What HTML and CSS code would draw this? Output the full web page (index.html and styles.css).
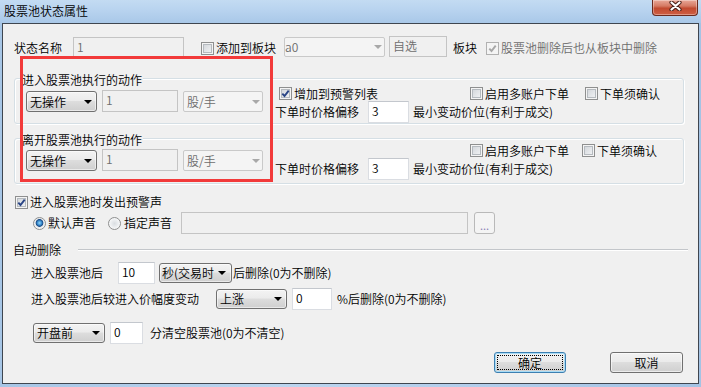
FILE: index.html
```html
<!DOCTYPE html>
<html lang="zh-CN">
<head>
    <meta charset="UTF-8">
    <meta name="viewport" content="width=device-width, initial-scale=1.0">
    <title>股票池状态属性</title>
    <link rel="stylesheet" href="styles.css">
</head>
<body>
    <div class="window">
        <div class="titlebar">
            <span class="title">股票池状态属性</span>
            <button type="button" class="close-btn" aria-label="关闭">
                <svg width="13" height="10" viewBox="0 0 13 10">
                    <path d="M2.5 1.5 L10.5 8.5 M10.5 1.5 L2.5 8.5" stroke="#4a2119" stroke-width="4.2" stroke-linecap="round"/>
                    <path d="M2.5 1.5 L10.5 8.5 M10.5 1.5 L2.5 8.5" stroke="#fff" stroke-width="2.2" stroke-linecap="round"/>
                </svg>
            </button>
        </div>

        <div class="client">
            <div class="row row-name">
                <span class="lbl lbl-name">状态名称</span>
                <div class="edit edit-disabled w-name">1</div>
                <label class="check check-block"><span class="box"></span>添加到板块</label>
                <div class="combo combo-disabled w-block"><span class="combo-text clip-a0">a0</span><span class="arrow"></span></div>
                <div class="edit edit-disabled w-self">自选</div>
                <span class="lbl lbl-block">板块</span>
                <label class="check check-disabled check-remove">
                    <span class="box"><svg class="tick" viewBox="0 0 11 11"><path d="M2.3 5.6 L4.5 8 L8.7 2.6"/></svg></span>股票池删除后也从板块中删除
                </label>
            </div>

            <div class="group group-enter">
                <span class="legend">进入股票池执行的动作</span>
                <div class="actions">
                    <div class="combo w-op"><span class="combo-text">无操作</span><span class="arrow"></span></div>
                    <div class="edit edit-disabled w-qty">1</div>
                    <div class="combo combo-disabled w-unit"><span class="combo-text">股/手</span><span class="arrow"></span></div>
                </div>
                <div class="orders">
                    <div class="order-top">
                        <label class="check check-alert">
                            <span class="box"><svg class="tick" viewBox="0 0 11 11"><path d="M2.3 5.6 L4.5 8 L8.7 2.6"/></svg></span>增加到预警列表
                        </label>
                        <label class="check check-multi"><span class="box"></span>启用多账户下单</label>
                        <label class="check"><span class="box"></span>下单须确认</label>
                    </div>
                    <div class="order-offset">
                        <span class="lbl">下单时价格偏移</span>
                        <div class="edit w-offset">3</div>
                        <span class="lbl lbl-tick">最小变动价位(有利于成交)</span>
                    </div>
                </div>
            </div>

            <div class="group group-leave">
                <span class="legend">离开股票池执行的动作</span>
                <div class="actions">
                    <div class="combo w-op"><span class="combo-text">无操作</span><span class="arrow"></span></div>
                    <div class="edit edit-disabled w-qty">1</div>
                    <div class="combo combo-disabled w-unit"><span class="combo-text">股/手</span><span class="arrow"></span></div>
                </div>
                <div class="orders">
                    <div class="order-top">
                        <label class="check check-multi"><span class="box"></span>启用多账户下单</label>
                        <label class="check"><span class="box"></span>下单须确认</label>
                    </div>
                    <div class="order-offset">
                        <span class="lbl">下单时价格偏移</span>
                        <div class="edit w-offset">3</div>
                        <span class="lbl lbl-tick">最小变动价位(有利于成交)</span>
                    </div>
                </div>
            </div>

            <div class="row row-sound">
                <label class="check">
                    <span class="box"><svg class="tick" viewBox="0 0 11 11"><path d="M2.3 5.6 L4.5 8 L8.7 2.6"/></svg></span>进入股票池时发出预警声
                </label>
            </div>

            <div class="row row-voice">
                <label class="radio"><span class="dot on"></span>默认声音</label>
                <label class="radio radio-custom"><span class="dot"></span>指定声音</label>
                <div class="edit edit-disabled w-path"></div>
                <button type="button" class="browse-btn">...</button>
            </div>

            <div class="section-head">
                <span class="lbl">自动删除</span>
                <span class="etched"></span>
            </div>

            <div class="row auto-row">
                <span class="lbl w-after">进入股票池后</span>
                <div class="edit w-secs">10</div>
                <div class="combo w-period"><span class="combo-text">秒(交易时</span><span class="arrow"></span></div>
                <span class="lbl lbl-del">后删除(0为不删除)</span>
            </div>

            <div class="row auto-row row-change">
                <span class="lbl">进入股票池后较进入价幅度变动</span>
                <div class="combo w-dir"><span class="combo-text">上涨</span><span class="arrow"></span></div>
                <div class="edit w-pct">0</div>
                <span class="lbl lbl-pct">%后删除(0为不删除)</span>
            </div>

            <div class="row auto-row row-clear">
                <div class="combo w-open"><span class="combo-text">开盘前</span><span class="arrow"></span></div>
                <div class="edit w-mins">0</div>
                <span class="lbl lbl-clear">分清空股票池(0为不清空)</span>
            </div>

            <div class="row row-buttons">
                <button type="button" class="btn btn-default">确定</button>
                <button type="button" class="btn">取消</button>
            </div>

            <div class="highlight"></div>
        </div>
    </div>
</body>
</html>
```

FILE: styles.css
```css
* {
    box-sizing: border-box;
}

body {
    margin: 0;
    background: #fff;
    font-family: "Noto Sans CJK SC", "Noto Sans", sans-serif;
    font-size: 12px;
    font-weight: 350;
    line-height: 16px;
    color: #000;
}

.window {
    width: 701px;
    height: 387px;
    display: flex;
    flex-direction: column;
    background: linear-gradient(to right, #a7c6e6, #bcd5ef 40%, #b2cdeb 70%, #a4c3e4);
}

/* title bar */
.titlebar {
    height: 23px;
    display: flex;
    justify-content: space-between;
    align-items: flex-start;
    padding-left: 4px;
    background: linear-gradient(to bottom, #c3dbf2 0%, #b8d3ef 45%, #a9c8e8 100%);
}

.title {
    padding-top: 3px;
}

.close-btn {
    width: 46px;
    height: 16px;
    margin-right: 3px;
    padding: 0;
    display: flex;
    justify-content: center;
    align-items: flex-start;
    padding-top: 1px;
    border: 1px solid #6b2a1e;
    border-top: none;
    border-radius: 0 0 4px 4px;
    background: linear-gradient(to bottom, #e9a898 0%, #d57a64 40%, #c24a30 55%, #cf5f44 100%);
    box-shadow: inset 0 0 0 1px rgba(255, 255, 255, 0.35);
}

/* dialog body */
.client {
    position: relative;
    height: 361px;
    margin: 0 2px;
    padding: 12px 11px 0 11px;
    border: 1px solid #3f4650;
    background: #f0f0f0;
}

.row {
    display: flex;
    align-items: center;
}

.lbl {
    white-space: nowrap;
}

/* text boxes */
.edit {
    height: 22px;
    padding: 1px 3px 0;
    border: 1px solid #dadde2;
    border-top-color: #c3c7cd;
    background: #fff;
    white-space: nowrap;
    flex-shrink: 0;
}

.edit-disabled {
    background: #f0f0f0;
    border-color: #c4c4c4;
    color: #6d6d6d;
}

/* drop-down lists */
.combo {
    height: 21px;
    display: flex;
    align-items: center;
    padding-left: 3px;
    border: 1px solid #707070;
    border-radius: 3px;
    background: linear-gradient(to bottom, #f3f3f3 0%, #ebebeb 45%, #dddddd 50%, #cfcfcf 100%);
    box-shadow: inset 0 0 0 1px rgba(255, 255, 255, 0.55);
    flex-shrink: 0;
    overflow: hidden;
}

.combo-text {
    white-space: nowrap;
}

.arrow {
    margin-left: auto;
    margin-right: 4px;
    width: 0;
    height: 0;
    border-left: 4px solid transparent;
    border-right: 4px solid transparent;
    border-top: 4px solid #000;
}

.combo-disabled {
    border-color: #c9c9c9;
    border-radius: 2px;
    background: #f4f4f4;
    box-shadow: none;
    color: #6d6d6d;
}

.combo-disabled .arrow {
    margin-right: 2px;
    border-top-color: #a8a8a8;
}

.clip-a0 {
    margin-left: -3px;
}

/* check boxes and radios */
.check,
.radio {
    display: flex;
    align-items: center;
    white-space: nowrap;
}

.box {
    width: 13px;
    height: 13px;
    margin-right: 2px;
    flex-shrink: 0;
    border: 1px solid #8e8f8f;
    background: linear-gradient(135deg, #cdd1d6, #f6f7f8);
    box-shadow: inset 0 0 0 1px #f4f4f4, inset 0 0 0 2px #b5babf;
}

.tick {
    display: block;
    width: 11px;
    height: 11px;
}

.tick path {
    fill: none;
    stroke: #2a4586;
    stroke-width: 1.9;
}

.check-disabled {
    color: #6d6d6d;
}

.check-disabled .box {
    border-color: #b1b1b1;
    background: #f4f4f4;
    box-shadow: none;
}

.check-disabled .tick path {
    stroke: #a7a7a7;
}

.dot {
    width: 13px;
    height: 13px;
    margin-right: 2px;
    border-radius: 50%;
    border: 1px solid #8e8f8f;
    background: radial-gradient(circle, #d9dde1 0, #eef0f2 4px, #fafafa 6px);
}

.dot.on {
    background: radial-gradient(circle at 50% 45%, #9ad8f8 0, #3f93d4 2px, #1a4a85 3.5px, #e4e7ea 4.2px, #fafafa 6px);
}

/* first row */
.row-name {
    height: 21px;
}

.row-name > .lbl,
.row-name > .check {
    padding-top: 3px;
}

.lbl-name {
    width: 59px;
}

.w-name {
    width: 111px;
    height: 20px;
}

.check-block {
    margin-left: 17px;
}

.w-block {
    width: 101px;
    height: 20px;
    margin-left: 8px;
}

.w-self {
    width: 58px;
    height: 21px;
    margin-left: 4px;
}

.lbl-block {
    margin-left: 6px;
}

.check-remove {
    margin-left: 9px;
}

/* action group boxes */
.group {
    position: relative;
    width: 670px;
    display: flex;
    align-items: flex-start;
    padding-left: 11px;
    border: 1px solid #d5dfe5;
    border-radius: 3px;
    box-shadow: inset 1px 1px 0 #fff, 1px 1px 0 #fff;
}

.group-enter {
    margin-top: 21px;
    padding-top: 8px;
}

.group-leave {
    margin-top: 14px;
    padding-top: 5px;
    padding-bottom: 3px;
}

.legend {
    position: absolute;
    top: -7px;
    left: 6px;
    padding: 0 1px;
    background: #f0f0f0;
    white-space: nowrap;
}

.actions {
    display: flex;
    align-items: flex-end;
    gap: 5px;
}

.group-enter .actions {
    margin-top: 3px;
}

.group-leave .actions {
    margin-top: 5px;
}

.w-op {
    width: 71px;
}

.w-qty {
    width: 76px;
}

.w-unit {
    width: 80px;
}

.orders {
    margin-left: 12px;
}

.order-top {
    display: flex;
    align-items: center;
    height: 13px;
}

.group-leave .order-top {
    padding-left: 195px;
}

.check-alert {
    width: 191px;
    margin-left: 4px;
}

.check-multi {
    width: 115px;
}

.group-leave .check-multi {
    width: 112px;
}

.order-offset {
    display: flex;
    align-items: center;
    height: 22px;
    margin-top: 1px;
}

.w-offset {
    width: 41px;
    margin-left: 9px;
}

.lbl-tick {
    margin-left: 4px;
}

/* alert sound */
.row-sound {
    margin-top: 10px;
    margin-left: 1px;
    height: 16px;
}

.row-voice {
    margin-top: 2px;
    height: 22px;
    padding-left: 19px;
}

.radio-custom {
    margin-left: 12px;
}

.radio-custom .dot {
    margin-right: 3px;
}

.w-path {
    width: 287px;
    margin-left: 9px;
}

.browse-btn {
    width: 21px;
    height: 22px;
    margin-left: 6px;
    padding: 4px 0 0;
    border: 1px solid #b9b9b9;
    border-radius: 3px;
    background: #f4f4f4;
    color: #8c80b4;
    font-family: inherit;
    font-size: 11px;
    line-height: 14px;
}

/* auto delete */
.section-head {
    display: flex;
    align-items: center;
    height: 16px;
    margin-top: 8px;
    margin-left: -1px;
}

.etched {
    flex: 1;
    height: 2px;
    margin-left: 17px;
    margin-right: -1px;
    border-top: 1px solid #c3c6ca;
    border-bottom: 1px solid #fff;
}

.auto-row {
    height: 22px;
    margin-top: 4px;
    padding-left: 17px;
}

.w-after {
    width: 72px;
}

.w-secs {
    width: 37px;
    margin-left: 15px;
}

.w-period {
    width: 73px;
    height: 20px;
    margin-left: 4px;
    padding-left: 2px;
}

.w-period .arrow {
    margin-right: 5px;
}

.lbl-del {
    margin-left: 1px;
}

.w-dir {
    width: 71px;
    height: 20px;
    margin-left: 17px;
}

.w-pct {
    width: 40px;
    margin-left: 5px;
}

.lbl-pct {
    margin-left: 5px;
}

.row-clear {
    margin-top: 12px;
    padding-left: 19px;
}

.w-open {
    width: 72px;
    height: 20px;
}

.w-mins {
    width: 33px;
    margin-left: 5px;
}

.lbl-clear {
    margin-left: 7px;
}

/* dialog buttons */
.row-buttons {
    margin-top: 8px;
    justify-content: flex-end;
    gap: 44px;
    padding-right: 4px;
}

.btn {
    position: relative;
    width: 72px;
    height: 21px;
    padding: 0;
    border: 1px solid #707070;
    border-radius: 3px;
    background: linear-gradient(to bottom, #f2f2f2 0%, #ebebeb 45%, #dddddd 50%, #cfcfcf 100%);
    box-shadow: inset 0 0 0 1px rgba(255, 255, 255, 0.6);
    font-family: inherit;
    font-size: 12px;
    font-weight: inherit;
    line-height: 16px;
    color: #000;
}

.btn + .btn {
    width: 73px;
}

.btn-default {
    border-color: #3c7fb1;
    box-shadow: inset 0 0 0 1px #a8dcf6;
}

.btn-default::after {
    content: "";
    position: absolute;
    inset: 2px;
    border: 1px dotted #000;
}

/* red annotation box */
.highlight {
    position: absolute;
    left: 17px;
    top: 32px;
    width: 253px;
    height: 126px;
    border: 3px solid #f23a3a;
}
```
